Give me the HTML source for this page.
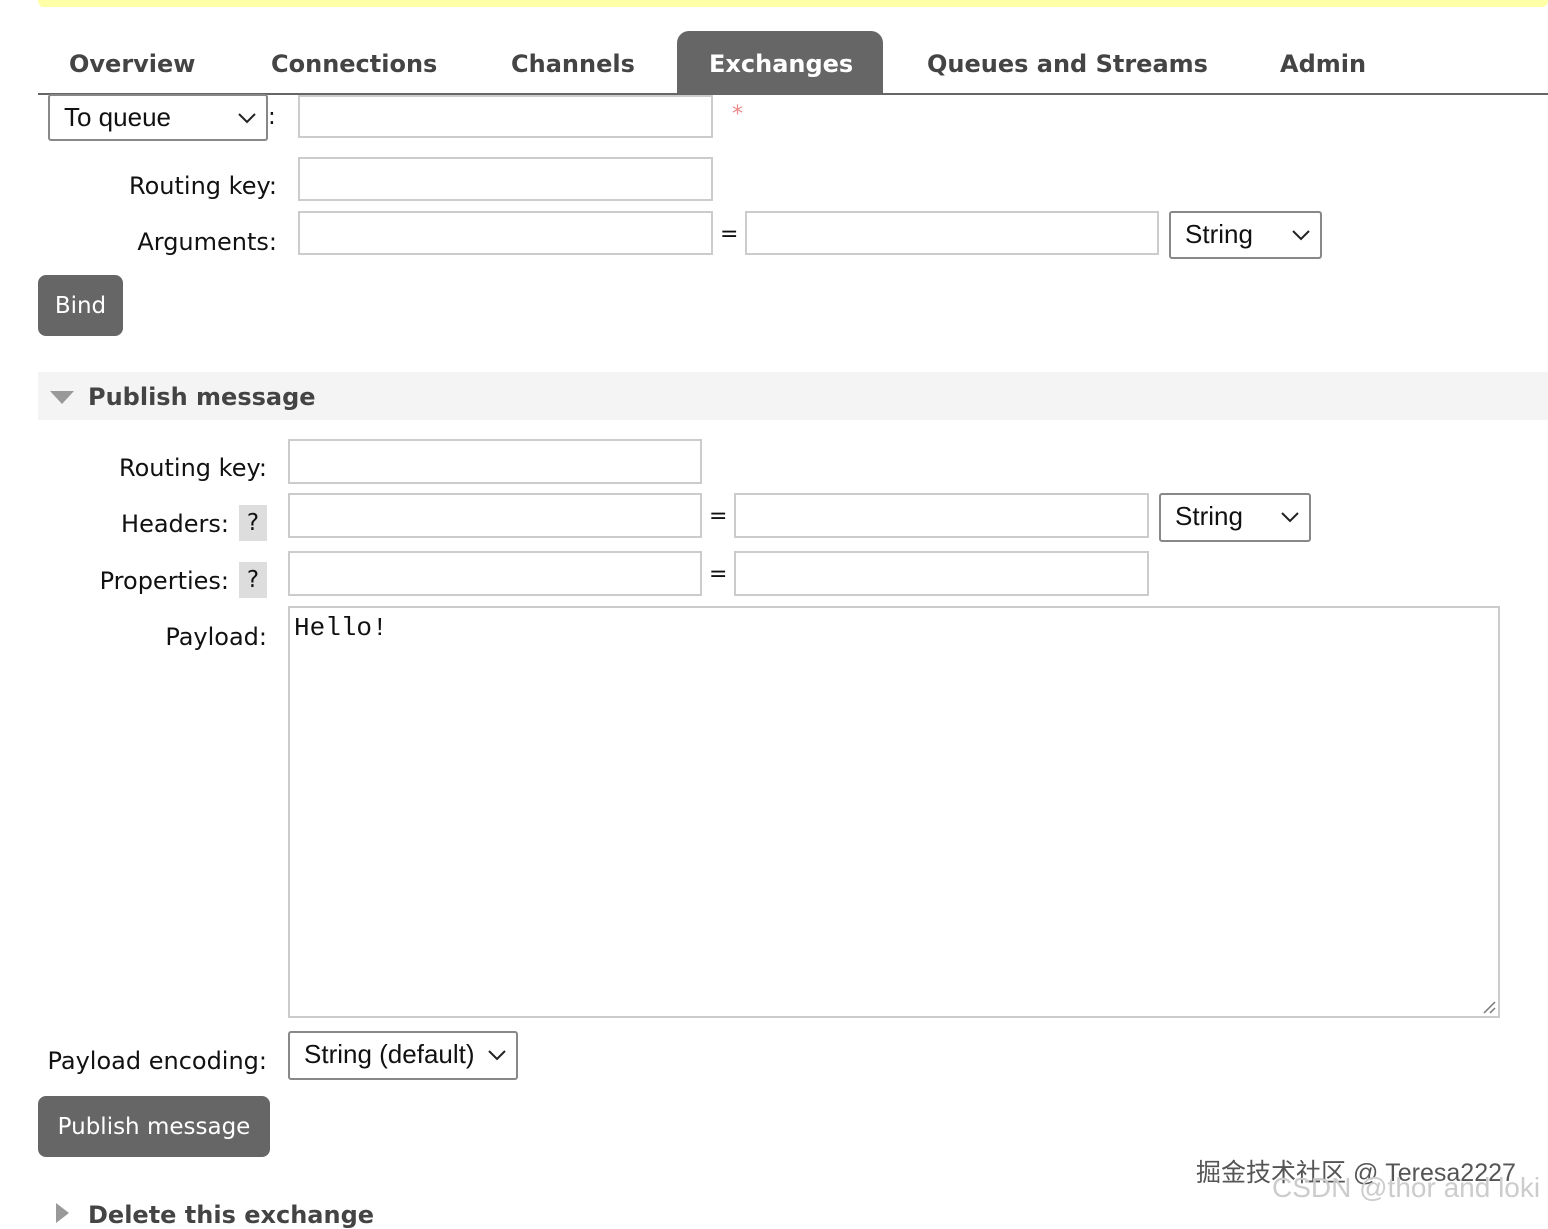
<!DOCTYPE html>
<html><head><meta charset="utf-8"><style>
*{box-sizing:border-box;margin:0;padding:0}
body{width:1548px;height:1214px;background:#fff;position:relative;overflow:hidden;font-family:"DejaVu Sans","Liberation Sans",sans-serif;color:#111;font-size:22px}
.a{position:absolute}
.tab{position:absolute;top:50px;font-weight:bold;font-size:24px;color:#444}
.in{position:absolute;border:2px solid #ccc;background:#fff}
.lbl{position:absolute;text-align:right;font-size:24px;white-space:nowrap}
.sel{position:absolute;border:2px solid #888;border-radius:3px;background:#fff;font-family:"Liberation Sans",sans-serif;font-size:26px;padding-left:14px;line-height:42px}
.sel svg{position:absolute;right:10px;top:16px}
.btn{position:absolute;background:#666;color:#fff;border-radius:8px;font-size:23px;text-align:center}
.q{position:absolute;background:#ddd;width:28px;height:36px;text-align:center;line-height:36px;font-size:23px}
</style></head><body>
<div class="a" style="left:38px;top:0;width:1510px;height:7px;background:#ffffa8;border-radius:0 0 6px 6px"></div>
<div class="tab" style="left:69px">Overview</div>
<div class="tab" style="left:271px">Connections</div>
<div class="tab" style="left:511px">Channels</div>
<div class="a" style="left:677px;top:31px;width:206px;height:63px;background:#666;border-radius:12px 12px 0 0"></div>
<div class="tab" style="left:709px;color:#fff">Exchanges</div>
<div class="tab" style="left:927px">Queues and Streams</div>
<div class="tab" style="left:1280px">Admin</div>
<div class="a" style="left:38px;top:93px;width:1510px;height:2px;background:#666"></div>

<div class="sel" style="left:48px;top:94px;width:220px;height:47px">To queue<svg width="18" height="12"><path d="M1 2l8 8 8-8" stroke="#222" stroke-width="2" fill="none"/></svg></div>
<div class="a" style="left:268px;top:104px;font-size:23px">:</div>
<div class="in" style="left:298px;top:95px;width:415px;height:43px"></div>
<div class="a" style="left:732px;top:102px;color:#e88;font-size:22px">*</div>
<div class="lbl" style="left:60px;top:172px;width:217px">Routing key:</div>
<div class="in" style="left:298px;top:157px;width:415px;height:44px"></div>
<div class="lbl" style="left:60px;top:228px;width:217px">Arguments:</div>
<div class="in" style="left:298px;top:211px;width:415px;height:44px"></div>
<div class="a" style="left:720px;top:222px">=</div>
<div class="in" style="left:745px;top:211px;width:414px;height:44px"></div>
<div class="sel" style="left:1169px;top:211px;width:153px;height:48px">String<svg width="18" height="12"><path d="M1 2l8 8 8-8" stroke="#222" stroke-width="2" fill="none"/></svg></div>
<div class="btn" style="left:38px;top:275px;width:85px;height:61px;line-height:63px">Bind</div>

<div class="a" style="left:38px;top:372px;width:1510px;height:48px;background:#f4f4f4"></div>
<svg class="a" style="left:50px;top:391px" width="24" height="14"><path d="M0 0h24L12 13z" fill="#999"/></svg>
<div class="a" style="left:88px;top:383px;font-weight:bold;font-size:24px;color:#444">Publish message</div>

<div class="lbl" style="left:50px;top:454px;width:217px">Routing key:</div>
<div class="in" style="left:288px;top:439px;width:414px;height:45px"></div>
<div class="lbl" style="left:20px;top:510px;width:209px">Headers:</div>
<div class="q" style="left:239px;top:505px">?</div>
<div class="in" style="left:288px;top:493px;width:414px;height:45px"></div>
<div class="a" style="left:709px;top:504px">=</div>
<div class="in" style="left:734px;top:493px;width:415px;height:45px"></div>
<div class="sel" style="left:1159px;top:493px;width:152px;height:49px">String<svg width="18" height="12"><path d="M1 2l8 8 8-8" stroke="#222" stroke-width="2" fill="none"/></svg></div>
<div class="lbl" style="left:20px;top:567px;width:209px">Properties:</div>
<div class="q" style="left:239px;top:562px">?</div>
<div class="in" style="left:288px;top:551px;width:414px;height:45px"></div>
<div class="a" style="left:709px;top:562px">=</div>
<div class="in" style="left:734px;top:551px;width:415px;height:45px"></div>
<div class="lbl" style="left:50px;top:623px;width:217px">Payload:</div>
<div class="in" style="left:288px;top:606px;width:1212px;height:412px;padding:5px 4px;font-family:'Liberation Mono',monospace;font-size:26px">Hello!
<svg class="a" style="right:2px;bottom:2px" width="14" height="14"><path d="M2 13L13 2M8 13L13 8" stroke="#777" stroke-width="1.5"/></svg></div>
<div class="lbl" style="left:30px;top:1047px;width:237px">Payload encoding:</div>
<div class="sel" style="left:288px;top:1031px;width:230px;height:49px">String (default)<svg width="18" height="12"><path d="M1 2l8 8 8-8" stroke="#222" stroke-width="2" fill="none"/></svg></div>
<div class="btn" style="left:38px;top:1096px;width:232px;height:61px;line-height:63px">Publish message</div>
<div class="a" style="left:1196px;top:1153px;font-family:'Liberation Sans','Noto Sans CJK SC',sans-serif;font-size:25px;color:#555">掘金技术社区 @ Teresa2227</div>
<div class="a" style="left:1272px;top:1172px;font-family:'Liberation Sans',sans-serif;font-size:28px;color:#ccc">CSDN @thor and loki</div>
<svg class="a" style="left:56px;top:1203px" width="14" height="20"><path d="M0 0L13 10L0 20z" fill="#999"/></svg>
<div class="a" style="left:88px;top:1201px;font-weight:bold;font-size:24px;color:#444">Delete this exchange</div>
</body></html>
